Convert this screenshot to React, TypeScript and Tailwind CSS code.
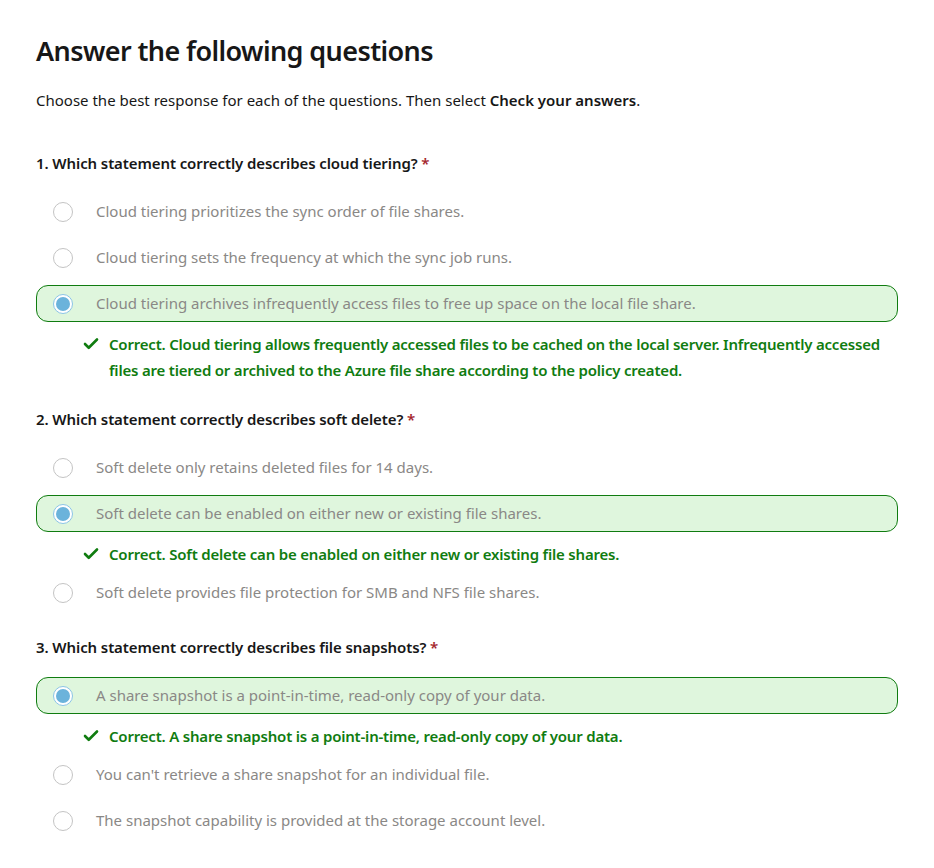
import { Check } from 'lucide-react'

type Option = { text: string; selected?: boolean; feedback?: string }
type Question = { title: string; options: Option[] }

const questions: Question[] = [
    {
        title: '1. Which statement correctly describes cloud tiering?',
        options: [
            { text: 'Cloud tiering prioritizes the sync order of file shares.' },
            { text: 'Cloud tiering sets the frequency at which the sync job runs.' },
            {
                text: 'Cloud tiering archives infrequently access files to free up space on the local file share.',
                selected: true,
                feedback:
                    'Correct. Cloud tiering allows frequently accessed files to be cached on the local server. Infrequently accessed files are tiered or archived to the Azure file share according to the policy created.',
            },
        ],
    },
    {
        title: '2. Which statement correctly describes soft delete?',
        options: [
            { text: 'Soft delete only retains deleted files for 14 days.' },
            {
                text: 'Soft delete can be enabled on either new or existing file shares.',
                selected: true,
                feedback: 'Correct. Soft delete can be enabled on either new or existing file shares.',
            },
            { text: 'Soft delete provides file protection for SMB and NFS file shares.' },
        ],
    },
    {
        title: '3. Which statement correctly describes file snapshots?',
        options: [
            {
                text: 'A share snapshot is a point-in-time, read-only copy of your data.',
                selected: true,
                feedback: 'Correct. A share snapshot is a point-in-time, read-only copy of your data.',
            },
            { text: "You can't retrieve a share snapshot for an individual file." },
            { text: 'The snapshot capability is provided at the storage account level.' },
        ],
    },
]

function Radio({ selected }: { selected?: boolean }) {
    if (selected) {
        return (
            <span className="w-5 h-5 rounded-full border border-[#8cc4e6] bg-white flex items-center justify-center shrink-0">
                <span className="w-[14px] h-[14px] rounded-full bg-[#6bb3db]" />
            </span>
        )
    }
    return <span className="w-5 h-5 rounded-full border border-[#c4c4c4] bg-white shrink-0" />
}

function QuestionBlock({ q }: { q: Question }) {
    return (
        <div className="flex flex-col">
            <h3 className="text-[15px] leading-5 font-semibold tracking-[-0.1px] text-[#171717] mb-5">
                {q.title} <span className="text-[#a4262c]">*</span>
            </h3>
            <div className="flex flex-col gap-[9px]">
                {q.options.map((o, i) => (
                    <div key={o.text} className="flex flex-col gap-[9px]">
                        <div
                            className={`h-[37px] flex items-center rounded-xl pl-[16px] ${o.selected ? 'bg-[#dff6dd] border border-[#107c10]' : 'border border-transparent'
                                }`}
                        >
                            <Radio selected={o.selected} />
                            <span className="ml-[23px] text-[15px] text-[#8a8886]">{o.text}</span>
                        </div>
                        {o.feedback && (
                            <div className={`flex items-start pl-[46px] ${i < q.options.length - 1 ? '-mb-[2px]' : ''}`}>
                                <Check className="w-[18px] h-[18px] mt-[4px] mr-[9px] shrink-0 text-[#107c10]" strokeWidth={3.5} />
                                <p className="text-[15px] leading-[26px] font-semibold tracking-[-0.2px] text-[#107c10]">{o.feedback}</p>
                            </div>
                        )}
                    </div>
                ))}
            </div>
        </div>
    )
}

export default function App() {
    return (
        <div
            className="w-[934px] h-[868px] bg-white overflow-hidden pl-9 pr-9 pt-[31px]"
            style={{ fontFamily: '"Noto Sans", "Open Sans", sans-serif' }}
        >
            <h1 className="text-[27px] leading-10 font-semibold tracking-[-0.6px] text-[#171717]">Answer the following questions</h1>
            <p className="mt-[19px] text-[15px] leading-5 text-[#171717]">
                Choose the best response for each of the questions. Then select <span className="font-semibold">Check your answers</span>.
            </p>
            <div className="mt-[43px] flex flex-col gap-[26px]">
                {questions.map((q) => (
                    <QuestionBlock key={q.title} q={q} />
                ))}
            </div>
        </div>
    )
}
